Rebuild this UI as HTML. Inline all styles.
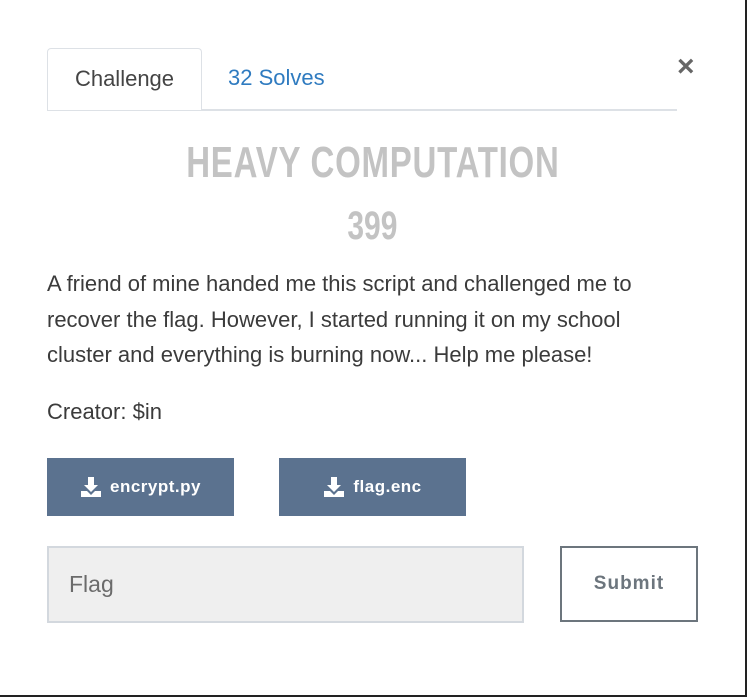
<!DOCTYPE html>
<html><head><style>
html,body{margin:0;padding:0}
body{width:745px;height:695px;background:#fff;border-right:2px solid #222;border-bottom:2px solid #222;position:relative;overflow:hidden;font-family:"Liberation Sans",sans-serif;color:#3b3b3b}
.abs{position:absolute}
.tab1{left:47px;top:48px;width:155px;height:62px;border:1px solid #dde1e6;border-bottom:none;border-radius:4px 4px 0 0;background:#fff;box-sizing:border-box;font-size:22px;color:#444;text-align:center;line-height:60px}
.line{left:47px;top:109px;width:630px;height:2px;background:#dde1e6}
.tab2{left:228px;top:65px;font-size:22px;color:#2f7bc0}
.x{left:677px;top:50px;font-size:30px;color:#666;font-weight:bold}
.title{left:0;width:745px;text-align:center;top:138px;font-size:44px;font-weight:bold;color:#c3c3c3;letter-spacing:1px}
.title span,.pts span{display:inline-block;transform:scaleX(0.75)}
.pts{left:0;width:745px;text-align:center;top:204px;font-size:40px;font-weight:bold;color:#c3c3c3}
.desc{left:47px;top:266px;width:640px;font-size:22px;line-height:35.5px;color:#3b3b3b}
.cr{left:47px;top:399px;font-size:22px}
.btn{top:458px;width:187px;height:58px;background:#5b728f;color:#fff;font-size:17px;font-weight:bold;letter-spacing:0.5px;display:flex;align-items:center;justify-content:center}
.btn svg{margin-right:8px}
.inp{left:47px;top:546px;width:477px;height:77px;box-sizing:border-box;background:#efefef;border:2px solid #d3d8de;font-size:23px;color:#6b6b6b;padding-left:20px;line-height:73px}
.sub{left:560px;top:546px;width:138px;height:76px;box-sizing:border-box;border:2px solid #6c757d;font-size:19px;font-weight:bold;color:#6c757d;text-align:center;line-height:72px;letter-spacing:1px}
</style></head><body>
<div class="abs line"></div>
<div class="abs tab1">Challenge</div>
<div class="abs tab2">32 Solves</div>
<div class="abs x">×</div>
<div class="abs title"><span>HEAVY COMPUTATION</span></div>
<div class="abs pts"><span>399</span></div>
<div class="abs desc">A friend of mine handed me this script and challenged me to recover the flag. However, I started running it on my school cluster and everything is burning now... Help me please!</div>
<div class="abs cr">Creator: $in</div>
<div class="abs btn" style="left:47px"><svg width="22" height="22" viewBox="0 0 22 22"><path d="M8 1h6v8h4l-7 7-7-7h4z" fill="#fff"/><path d="M1 15h6l4 4 4-4h6v6H1z" fill="#fff"/></svg>encrypt.py</div>
<div class="abs btn" style="left:279px"><svg width="22" height="22" viewBox="0 0 22 22"><path d="M8 1h6v8h4l-7 7-7-7h4z" fill="#fff"/><path d="M1 15h6l4 4 4-4h6v6H1z" fill="#fff"/></svg>flag.enc</div>
<div class="abs inp">Flag</div>
<div class="abs sub">Submit</div>
</body></html>
